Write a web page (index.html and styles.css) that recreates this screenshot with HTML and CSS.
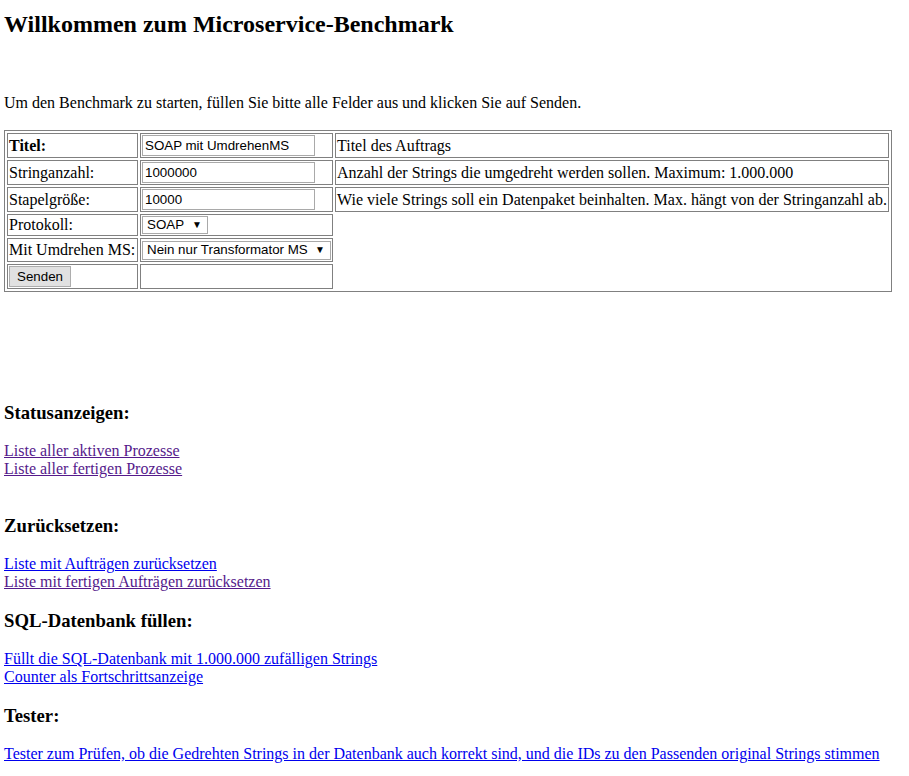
FILE: index.html
```html
<!DOCTYPE html>
<html lang="de">
<head>
<meta charset="utf-8">
<title>Microservice-Benchmark</title>
<link rel="stylesheet" href="styles.css">
</head>
<body>
<h1 class="title">Willkommen zum Microservice-Benchmark</h1>
<p class="intro">Um den Benchmark zu starten, füllen Sie bitte alle Felder aus und klicken Sie auf Senden.</p>
<form class="form">
<table class="bench">
<colgroup><col class="col-label"><col class="col-field"><col class="col-desc"></colgroup>
<tr class="row-input">
<td><b>Titel:</b></td>
<td><input class="field" type="text" value="SOAP mit UmdrehenMS"></td>
<td>Titel des Auftrags</td>
</tr>
<tr class="row-input">
<td>Stringanzahl:</td>
<td><input class="field" type="text" value="1000000"></td>
<td>Anzahl der Strings die umgedreht werden sollen. Maximum: 1.000.000</td>
</tr>
<tr class="row-input">
<td>Stapelgröße:</td>
<td><input class="field" type="text" value="10000"></td>
<td>Wie viele Strings soll ein Datenpaket beinhalten. Max. hängt von der Stringanzahl ab.</td>
</tr>
<tr class="row-protocol">
<td>Protokoll:</td>
<td><span class="select select-small"><select><option>SOAP</option><option>REST</option></select><span class="arrow">▼</span></span></td>
</tr>
<tr class="row-reverse">
<td>Mit Umdrehen MS:</td>
<td><span class="select select-large"><select><option>Nein nur Transformator MS</option></select><span class="arrow">▼</span></span></td>
</tr>
<tr class="row-submit">
<td><button class="button" type="button">Senden</button></td>
<td></td>
</tr>
</table>
</form>

<section class="section section-status">
<h3 class="heading">Statusanzeigen:</h3>
<div class="links">
<a class="link visited" href="#aktiv">Liste aller aktiven Prozesse</a>
<a class="link visited" href="#fertig">Liste aller fertigen Prozesse</a>
</div>
</section>

<section class="section section-reset">
<h3 class="heading">Zurücksetzen:</h3>
<div class="links">
<a class="link" href="#reset-auftraege">Liste mit Aufträgen zurücksetzen</a>
<a class="link visited" href="#reset-fertig">Liste mit fertigen Aufträgen zurücksetzen</a>
</div>
</section>

<section class="section">
<h3 class="heading">SQL-Datenbank füllen:</h3>
<div class="links">
<a class="link" href="#fill">Füllt die SQL-Datenbank mit 1.000.000 zufälligen Strings</a>
<a class="link" href="#counter">Counter als Fortschrittsanzeige</a>
</div>
</section>

<section class="section">
<h3 class="heading">Tester:</h3>
<div class="links">
<a class="link" href="#tester">Tester zum Prüfen, ob die Gedrehten Strings in der Datenbank auch korrekt sind, und die IDs zu den Passenden original Strings stimmen</a>
</div>
</section>
</body>
</html>
```

FILE: styles.css
```css
html, body {
  background: #fff;
}

body {
  margin: 0;
  padding: 0 4px;
  font-family: "Liberation Serif", "Times New Roman", serif;
  font-size: 16px;
  line-height: 18px;
  color: #000;
}

.title {
  margin: 10px 0 0;
  font-size: 24px;
  line-height: 28px;
  font-weight: bold;
}

.intro {
  margin: 56px 0 0;
}

.form {
  margin: 18px 0 0;
}

.bench {
  border: 1px solid #808080;
  border-spacing: 2px;
  table-layout: fixed;
  width: 888px;
}

.col-label { width: 131px; }
.col-field { width: 193px; }
.col-desc { width: 554px; }

.bench td {
  border: 1px solid #808080;
  padding: 1px;
  vertical-align: middle;
  white-space: nowrap;
}

.row-input { height: 25px; }
.row-protocol { height: 22px; }
.row-reverse { height: 24px; }
.row-submit { height: 25px; }

.field {
  display: block;
  box-sizing: border-box;
  width: 173px;
  height: 21px;
  margin: 0;
  padding: 1px 2px;
  border: 1px solid #a9a9a9;
  font-family: "Liberation Sans", Arial, sans-serif;
  font-size: 13.33px;
  color: #000;
  background: #fff;
}

.select {
  display: flex;
  align-items: center;
  box-sizing: border-box;
  border: 1px solid #a9a9a9;
  background: #fff;
  font-family: "Liberation Sans", Arial, sans-serif;
  font-size: 13.33px;
}

.select select {
  appearance: none;
  -webkit-appearance: none;
  flex: 1;
  min-width: 0;
  margin: 0;
  padding: 0 0 0 4px;
  border: 0;
  background: transparent;
  font: inherit;
  color: #000;
  outline: none;
}

.select-small {
  width: 66px;
  height: 18px;
}

.select-large {
  width: 189px;
  height: 19px;
}

.arrow {
  font-size: 10px;
  line-height: 1;
  margin: 0 5px 0 4px;
  color: #000;
}

.button {
  display: block;
  box-sizing: border-box;
  width: 62px;
  height: 21px;
  margin: 0;
  padding: 0;
  border: 1px solid #adadad;
  background: #e1e1e1;
  font-family: "Liberation Sans", Arial, sans-serif;
  font-size: 13.33px;
  color: #000;
}

.section {
  margin-top: 19px;
}

.section-status {
  margin-top: 110px;
}

.section-reset {
  margin-top: 37px;
}

.heading {
  margin: 0;
  font-size: 18.72px;
  line-height: 22px;
  font-weight: bold;
}

.links {
  margin-top: 18px;
}

.link {
  display: block;
  width: fit-content;
  color: #0000ee;
  text-decoration: underline;
}

.link.visited {
  color: #551a8b;
}
```
